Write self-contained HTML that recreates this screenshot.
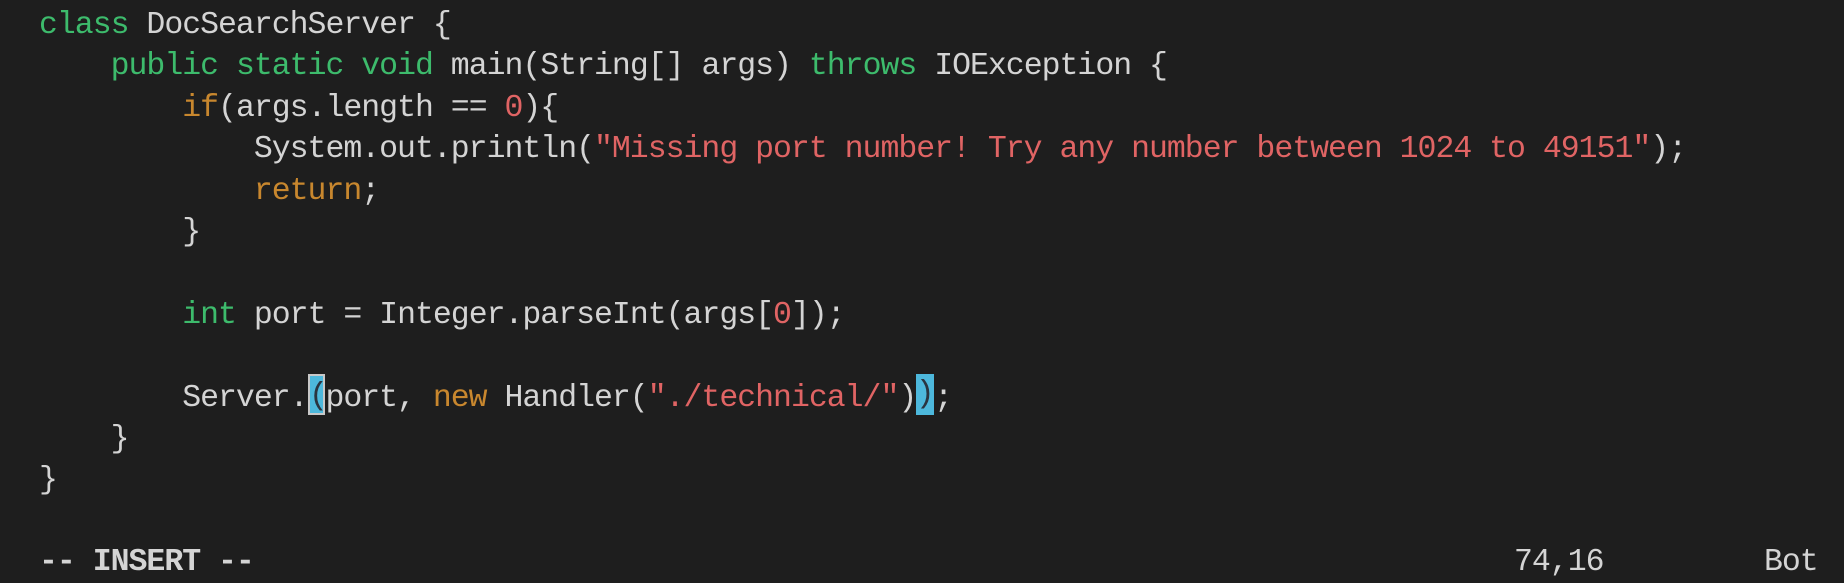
<!DOCTYPE html>
<html><head><meta charset="utf-8"><style>
html,body{margin:0;padding:0;background:#1e1e1e;width:1844px;height:578px;overflow:hidden}
pre{margin:0;position:absolute;left:39px;top:5px;font-family:"Liberation Mono",monospace;font-size:31.5px;letter-spacing:-1.0px;line-height:41.4px;color:#d4d4d4}
.g{color:#3dbb6c}.o{color:#c8872e}.r{color:#e06464}
.c{position:relative;top:-4px;display:inline-block;width:17.9px;height:41.4px;vertical-align:top;background:#4db8dc;color:#2a3440;box-sizing:border-box;letter-spacing:0;text-indent:-0.5px}
.cur{border:2px solid #c8c8c8}
.b{font-weight:bold}
.st{position:absolute;top:542px;font-family:"Liberation Mono",monospace;font-size:31.5px;letter-spacing:-1.0px;line-height:41.4px;color:#d4d4d4}
</style></head><body>
<pre><span class="g">class</span> DocSearchServer {
    <span class="g">public</span> <span class="g">static</span> <span class="g">void</span> main(String[] args) <span class="g">throws</span> IOException {
        <span class="o">if</span>(args.length == <span class="r">0</span>){
            System.out.println(<span class="r">"Missing port number! Try any number between 1024 to 49151"</span>);
            <span class="o">return</span>;
        }

        <span class="g">int</span> port = Integer.parseInt(args[<span class="r">0</span>]);

        Server.<span class="c cur">(</span>port, <span class="o">new</span> Handler(<span class="r">"./technical/"</span>)<span class="c">)</span>;
    }
}</pre>
<div class="st b" style="left:39px">-- INSERT --</div>
<div class="st" style="left:1514px">74,16</div>
<div class="st" style="left:1764px">Bot</div>
</body></html>
